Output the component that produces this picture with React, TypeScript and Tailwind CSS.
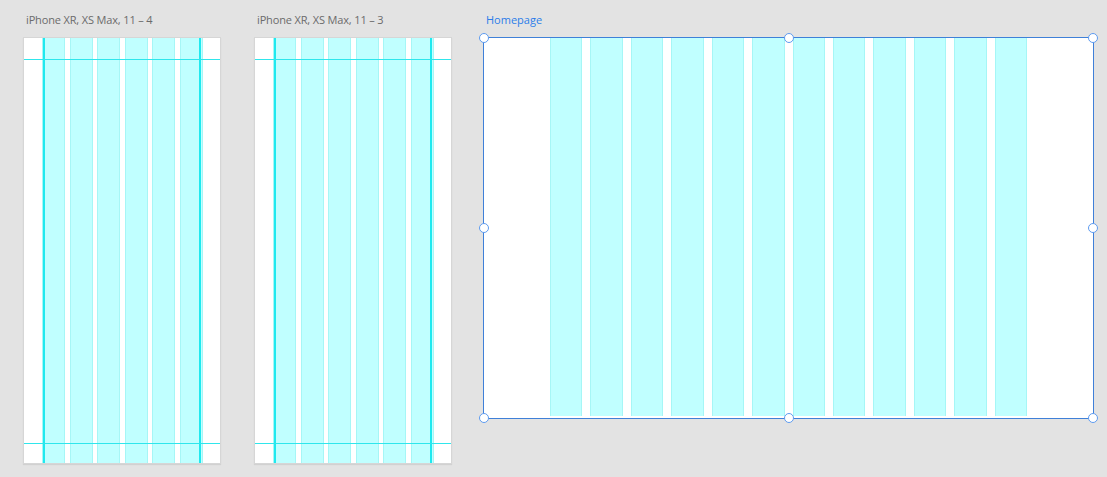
import React from "react";

const phoneCols = [0, 1, 2, 3, 4, 5];
const homeCols = [0, 1, 2, 3, 4, 5, 6, 7, 8, 9, 10, 11];

function PhoneBoard({ title }: { title: string }) {
  return (
    <div className="flex flex-col w-[198px] shrink-0">
      <div className="h-[37px] pl-[3px] pt-[13px] text-[11px] leading-[14px] text-[#6b6b6b] tracking-[-0.15px] whitespace-nowrap" style={{ fontFamily: '"Open Sans", "Noto Sans", sans-serif' }}>
        {title}
      </div>
      <div className="relative w-[198px] h-[427px] bg-white border border-[#d6d6d6] shadow-[0_1px_1px_rgba(0,0,0,0.08)]">
        <div className="ml-[18px] mr-[17px] h-full grid grid-cols-6 gap-x-[4.6px]">
          {phoneCols.map((i) => (
            <div key={i} className="h-full bg-[#c0ffff] border-x border-[#a6f6f6]" />
          ))}
        </div>
        <div className="absolute top-0 bottom-0 left-[19px] w-[2px] bg-[#1fe9ef]" />
        <div className="absolute top-0 bottom-0 left-[175px] w-[1.5px] bg-[#1fe9ef]" />
        <div className="absolute left-0 right-0 top-[21px] h-[1px] bg-[#2fe6ec]" />
        <div className="absolute left-0 right-0 top-[405px] h-[1px] bg-[#2fe6ec]" />
      </div>
    </div>
  );
}

function Handle({ cls }: { cls: string }) {
  return (
    <div className={`absolute w-[10px] h-[10px] -ml-[5px] -mt-[5px] rounded-full bg-white border-[1.5px] border-[#5d9bf0] ${cls}`} />
  );
}

export default function App() {
  return (
    <div className="w-[1107px] h-[477px] bg-[#e3e3e3] overflow-hidden">
      <div className="flex pl-[23px]">
        <PhoneBoard title="iPhone XR, XS Max, 11 – 4" />
        <div className="w-[33px] shrink-0" />
        <PhoneBoard title="iPhone XR, XS Max, 11 – 3" />
        <div className="w-[31px] shrink-0" />
        <div className="flex flex-col w-[611px] shrink-0">
          <div className="h-[37px] pl-[3px] pt-[13px] text-[11px] leading-[14px] text-[#2b7de9]" style={{ fontFamily: '"Open Sans", "Noto Sans", sans-serif' }}>
            Homepage
          </div>
          <div className="relative w-[611px] h-[382px] bg-white border border-[#3f80d8]">
            <div className="px-[66px] pb-[2px] h-full grid grid-cols-12 gap-x-[8px]">
              {homeCols.map((i) => (
                <div key={i} className="h-full bg-[#c0ffff] border-x border-[#a6f6f6]" />
              ))}
            </div>
            <Handle cls="left-0 top-0" />
            <Handle cls="left-1/2 top-0" />
            <Handle cls="left-full top-0" />
            <Handle cls="left-0 top-1/2" />
            <Handle cls="left-full top-1/2" />
            <Handle cls="left-0 top-full" />
            <Handle cls="left-1/2 top-full" />
            <Handle cls="left-full top-full" />
          </div>
        </div>
      </div>
    </div>
  );
}
